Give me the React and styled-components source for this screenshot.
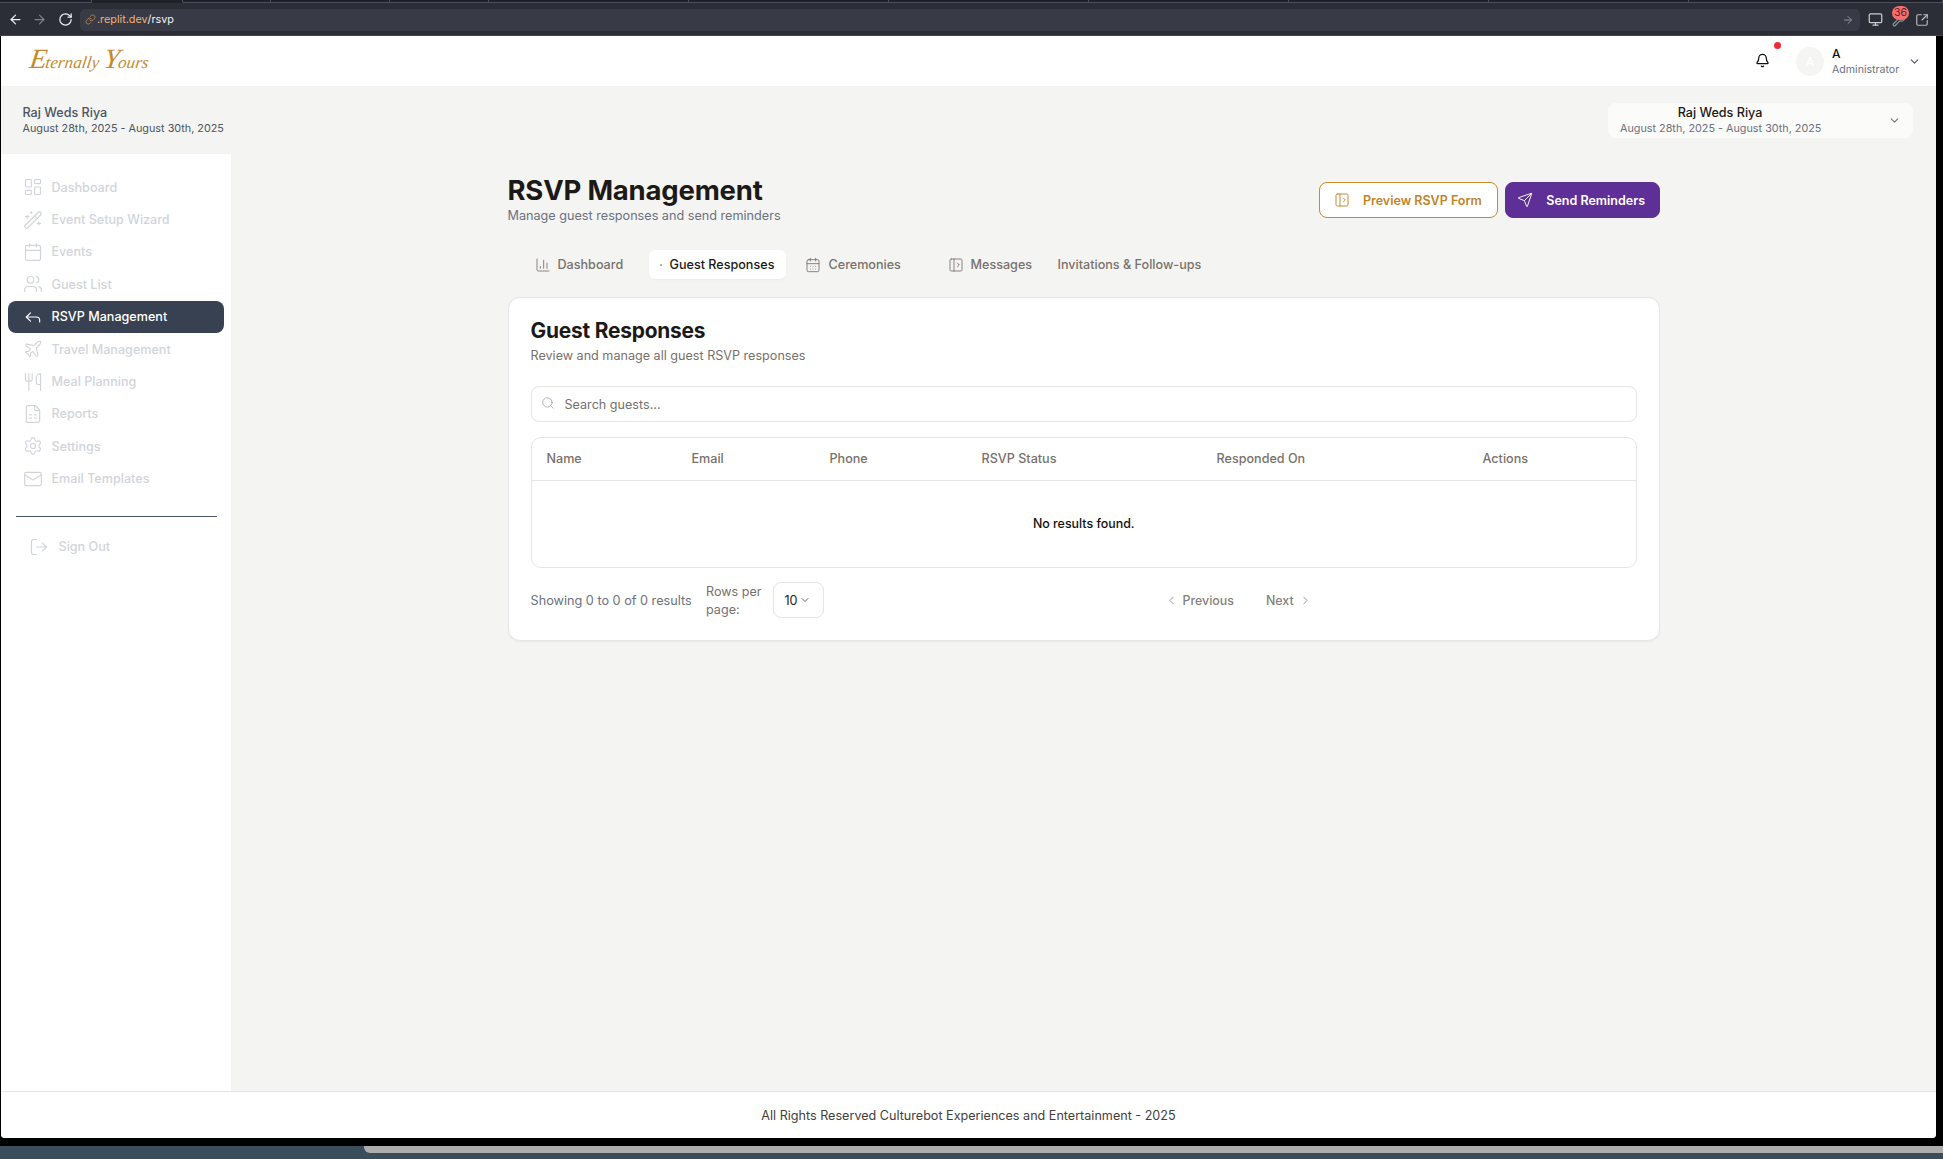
import React from 'react';
import styled, { createGlobalStyle } from 'styled-components';
import {
  ArrowLeft, ArrowRight, RotateCw, Link as LinkIcon, Monitor, Wrench, SquareArrowOutUpRight, Bell, ChevronDown,
  LayoutDashboard, WandSparkles, Calendar, Users, Reply, Plane, Utensils, FileSpreadsheet, Settings, Mail, LogOut,
  ChartColumn, CalendarDays, PanelLeftOpen, Send, Search, ChevronLeft, ChevronRight,
} from 'lucide-react';

const Global = createGlobalStyle`
  html, body { margin: 0; padding: 0; background: #000; }
  * { box-sizing: border-box; }
  body { font-family: Inter, "Liberation Sans", sans-serif; width: 1943px; height: 1159px; overflow: hidden; }
`;

const Screen = styled.div`display:flex;flex-direction:column;width:1943px;height:1159px;background:#000;`;
const TabStrip = styled.div`display:flex;height:3px;background:#1e2127;`;
const StripTab = styled.div`width:${p => p.$w}px;height:3px;border-bottom:1px solid ${p => (p.$active ? 'transparent' : '#4b505c')};border-right:1px solid #4b505c;`;
const Chrome = styled.div`display:flex;align-items:center;height:33px;padding:1px 10px 0 8px;background:#2b2e36;border-bottom:1px solid #41444d;color:#e5e7eb;`;
const NavIcon = styled.span`display:flex;width:${p => p.$w || 24}px;color:${p => p.$c || '#eceef2'};`;
const UrlBar = styled.div`display:flex;align-items:center;flex:1;height:22px;margin:0 4px 0 0;padding:0 6px 0 5px;border-radius:5px;background:#383b45;font-size:10.8px;`;
const Domain = styled.span`color:#f0ae74;margin-left:1px;`;
const Path = styled.span`color:#f1f2f4;flex:1;`;
const ExtWrap = styled.div`position:relative;display:flex;width:23px;justify-content:center;color:#8e919a;`;
const Badge = styled.span`position:absolute;top:-7px;left:5px;width:17px;height:14px;border-radius:8px;background:#f76e6e;color:#5a1f24;font-size:10.5px;line-height:14px;text-align:center;`;

const Frame = styled.div`display:flex;flex-direction:column;flex:none;width:1935px;height:1102px;margin-left:1px;background:#fff;border-radius:0 0 4px 4px;overflow:hidden;`;
const Header = styled.header`display:flex;align-items:center;height:50px;padding:0 15px 0 29px;background:#fff;`;
const Logo = styled.div`flex:1;margin-top:-4px;font-family:"Liberation Serif",serif;font-style:italic;font-size:17px;letter-spacing:0.1px;color:#c48a2c;transform:skewX(-8deg);transform-origin:left center;`;
const LogoCap = styled.span`font-size:28px;line-height:28px;letter-spacing:-1px;`;
const BellWrap = styled.div`position:relative;display:flex;width:20px;margin:-2px 21px 0 0;color:#111;`;
const Dot = styled.span`position:absolute;top:-11px;left:19px;width:7px;height:7px;border-radius:50%;background:#ef2b35;`;
const Avatar = styled.div`display:flex;align-items:center;justify-content:center;width:28px;height:29px;margin-right:8px;border-radius:50%;background:#f5f5f4;color:#fff;font-size:12px;font-weight:500;`;
const UserBox = styled.div`display:flex;flex-direction:column;width:76px;padding-top:2px;`;
const UserName = styled.span`font-size:12px;font-weight:500;line-height:14px;color:#111;`;
const UserRole = styled.span`font-size:10.6px;line-height:17px;color:#6b7280;`;
const SmallChevron = styled.span`display:flex;color:#4b5563;`;

const Body = styled.div`display:flex;flex-direction:column;flex:1;background:#f4f4f2;min-height:0;`;
const EventBar = styled.div`display:flex;justify-content:space-between;align-items:center;height:68px;padding:0 23px 0 21.5px;`;
const EventName = styled.div`font-size:12.6px;font-weight:500;line-height:17px;color:#4b5563;`;
const EventDate = styled.div`font-size:10.8px;line-height:15px;color:#4b5563;`;
const EventSelect = styled.div`position:relative;width:305px;height:35px;padding:1px 0 0 12px;border-radius:8px;background:#fbfbfa;`;
const SelName = styled.div`font-size:12.6px;font-weight:500;line-height:17px;color:#1c1917;text-align:center;width:200px;`;
const SelDate = styled.div`font-size:10.8px;line-height:15px;color:#6b7280;`;
const SelChevron = styled.span`position:absolute;right:12px;top:11px;display:flex;color:#6b7280;`;

const Columns = styled.div`display:flex;flex:1;min-height:0;`;
const Sidebar = styled.nav`flex:none;width:230px;padding:0 7px;background:#fff;`;
const NavList = styled.div`display:flex;flex-direction:column;padding-top:17px;`;
const NavItem = styled.div`display:flex;align-items:center;gap:9px;height:32.4px;padding-left:14.5px;border-radius:8px;font-size:12.6px;font-weight:500;color:${p => (p.$active ? '#fff' : '#d1d5db')};background:${p => (p.$active ? '#374151' : 'transparent')};`;
const Divider = styled.div`height:1px;margin:21px 7px 0 8px;background:#4b5563;`;
const SignOut = styled.div`display:flex;align-items:center;gap:9.5px;height:32px;margin-top:14px;padding-left:21px;font-size:12.6px;font-weight:500;color:#d1d5db;`;

const Main = styled.main`flex:1;padding:19px 276px 0 276.5px;`;
const TitleRow = styled.div`display:flex;justify-content:space-between;align-items:flex-start;height:78px;`;
const H1 = styled.h1`margin:0;font-size:27.5px;font-weight:700;line-height:35px;letter-spacing:-0.2px;color:#1c1917;`;
const Sub = styled.p`margin:0;font-size:12.65px;line-height:15px;color:#6b7280;`;
const Buttons = styled.div`display:flex;gap:7px;padding-top:9px;`;
const Btn = styled.button`display:flex;align-items:center;gap:13px;height:36px;padding:0 ${p => (p.$primary ? '14px 0 11.5px' : '15px 0 14px')};border:1px solid ${p => (p.$primary ? '#5f2f98' : '#c48a2c')};border-radius:8px;background:${p => (p.$primary ? '#5f2f98' : '#fff')};color:${p => (p.$primary ? '#fff' : '#c08428')};font:600 12.5px Inter,sans-serif;`;
const Tabs = styled.div`display:flex;align-items:center;height:29px;margin-top:-1px;padding-left:13px;`;
const Tab = styled.div`display:flex;align-items:center;gap:${p => p.$gap ?? 7}px;flex:none;width:${p => p.$w}px;height:29px;padding-left:${p => p.$pl}px;border-radius:6px;font-size:12.6px;font-weight:500;color:${p => (p.$active ? '#1c1917' : '#78716c')};background:${p => (p.$active ? '#fff' : 'transparent')};box-shadow:${p => (p.$active ? '0 1px 2px rgba(0,0,0,.04)' : 'none')};`;
const TinyDot = styled.span`width:2px;height:2px;border-radius:50%;background:#999;`;

const Card = styled.section`margin-top:18px;height:344px;padding:19px 22px 0;border:1px solid #e7e7ea;border-radius:12px;background:#fff;box-shadow:0 1px 2px rgba(0,0,0,.05);`;
const H2 = styled.h2`margin:0;font-size:20.9px;font-weight:700;line-height:28px;letter-spacing:-0.2px;color:#1c1917;`;
const CardSub = styled.p`margin:2px 0 0;font-size:12.6px;line-height:17px;color:#78716c;`;
const SearchBox = styled.div`display:flex;align-items:center;gap:10px;height:36px;margin-top:22px;padding:0 9px;border:1px solid #e7e5e4;border-radius:8px;font-size:12.6px;color:#78716c;`;
const SearchIcon = styled.span`display:flex;color:#9ca3af;margin-top:-2px;`;
const TableBox = styled.div`margin-top:15px;height:131px;border:1px solid #e7e5e4;border-radius:10px;`;
const HeadRow = styled.div`display:grid;grid-template-columns:145px 138px 152px 235px 266px 1fr;align-items:center;height:43px;padding-bottom:1px;border-bottom:1px solid #e7e5e4;`;
const HeadCell = styled.div`padding-left:15px;font-size:12.6px;font-weight:500;color:#78716c;`;
const Empty = styled.div`display:flex;align-items:center;justify-content:center;height:86px;padding-bottom:2px;font-size:12.4px;font-weight:500;color:#111;`;
const Pager = styled.div`display:flex;align-items:center;height:36px;margin-top:14px;`;
const Showing = styled.span`width:175.5px;font-size:12.7px;color:#6b7280;`;
const RowsLabel = styled.span`width:66.5px;margin-top:2px;font-size:12.6px;line-height:18px;color:#78716c;`;
const RowSelect = styled.div`display:flex;align-items:center;gap:1px;width:51px;height:36px;padding-left:11px;border:1px solid #e7e5e4;border-radius:8px;font-size:12.6px;color:#1c1917;`;
const PageBtn = styled.div`display:flex;align-items:center;gap:5px;margin-left:${p => p.$ml}px;font-size:12.4px;font-weight:500;color:#85817c;`;

const Footer = styled.footer`display:flex;align-items:center;justify-content:center;flex:none;height:47px;border-top:1px solid #e7e5e4;background:#fff;font-size:12.6px;color:#44403c;`;
const Desktop = styled.div`flex:1;margin-top:8px;background:#3a4d5b;`;
const Dock = styled.div`height:7px;margin-left:364px;border-radius:0 0 0 6px;background:#adadad;`;

const nav = [
  ['Dashboard', LayoutDashboard], ['Event Setup Wizard', WandSparkles], ['Events', Calendar], ['Guest List', Users],
  ['RSVP Management', Reply, true], ['Travel Management', Plane], ['Meal Planning', Utensils], ['Reports', FileSpreadsheet],
  ['Settings', Settings], ['Email Templates', Mail],
];
const heads = ['Name', 'Email', 'Phone', 'RSVP Status', 'Responded On', 'Actions'];
const strips = [92, 91, 88, 119, 99, 200, 200, 200, 200, 200, 200, 254];

export default function App() {
  return (
    <Screen>
      <Global />
      <TabStrip>{strips.map((w, i) => <StripTab key={i} $w={w} $active={i === 1} />)}</TabStrip>
      <Chrome>
        <NavIcon><ArrowLeft size={15} /></NavIcon>
        <NavIcon $w={26} $c="#7d8088"><ArrowRight size={15} /></NavIcon>
        <NavIcon $w={22}><RotateCw size={15} /></NavIcon>
        <UrlBar>
          <LinkIcon size={11} color="#a8835f" />
          <Domain>.replit.dev</Domain><Path>/rsvp</Path>
          <ArrowRight size={12} color="#8e919a" />
        </UrlBar>
        <ExtWrap><Monitor size={15} color="#c9cbd0" /></ExtWrap>
        <ExtWrap><Wrench size={14} /><Badge>36</Badge></ExtWrap>
        <ExtWrap><SquareArrowOutUpRight size={14} color="#b6b8be" /></ExtWrap>
      </Chrome>
      <Frame>
        <Header>
          <Logo><LogoCap>E</LogoCap>ternally <LogoCap>Y</LogoCap>ours</Logo>
          <BellWrap><Bell size={15} /><Dot /></BellWrap>
          <Avatar>A</Avatar>
          <UserBox><UserName>A</UserName><UserRole>Administrator</UserRole></UserBox>
          <SmallChevron><ChevronDown size={13} /></SmallChevron>
        </Header>
        <Body>
          <EventBar>
            <div>
              <EventName>Raj Weds Riya</EventName>
              <EventDate>August 28th, 2025 - August 30th, 2025</EventDate>
            </div>
            <EventSelect>
              <SelName>Raj Weds Riya</SelName>
              <SelDate>August 28th, 2025 - August 30th, 2025</SelDate>
              <SelChevron><ChevronDown size={13} /></SelChevron>
            </EventSelect>
          </EventBar>
          <Columns>
            <Sidebar>
              <NavList>
                {nav.map(([label, Icon, active]) => (
                  <NavItem key={label} $active={active}><Icon size={20} strokeWidth={1.4} />{label}</NavItem>
                ))}
              </NavList>
              <Divider />
              <SignOut><LogOut size={20} strokeWidth={1.4} />Sign Out</SignOut>
            </Sidebar>
            <Main>
              <TitleRow>
                <div>
                  <H1>RSVP Management</H1>
                  <Sub>Manage guest responses and send reminders</Sub>
                </div>
                <Buttons>
                  <Btn><PanelLeftOpen size={16} strokeWidth={1.4} />Preview RSVP Form</Btn>
                  <Btn $primary><Send size={16} strokeWidth={1.4} />Send Reminders</Btn>
                </Buttons>
              </TitleRow>
              <Tabs>
                <Tab $w={128} $pl={14}><ChartColumn size={16} strokeWidth={1.3} />Dashboard</Tab>
                <Tab $active $w={137} $pl={11} $gap={8}><TinyDot />Guest Responses</Tab>
                <Tab $w={147} $pl={19} $gap={8}><CalendarDays size={16} strokeWidth={1.3} />Ceremonies</Tab>
                <Tab $w={125} $pl={15}><PanelLeftOpen size={16} strokeWidth={1.3} />Messages</Tab>
                <Tab $w={160} $pl={0}>Invitations &amp; Follow-ups</Tab>
              </Tabs>
              <Card>
                <H2>Guest Responses</H2>
                <CardSub>Review and manage all guest RSVP responses</CardSub>
                <SearchBox><SearchIcon><Search size={14} strokeWidth={1.4} /></SearchIcon>Search guests...</SearchBox>
                <TableBox>
                  <HeadRow>{heads.map(h => <HeadCell key={h}>{h}</HeadCell>)}</HeadRow>
                  <Empty>No results found.</Empty>
                </TableBox>
                <Pager>
                  <Showing>Showing 0 to 0 of 0 results</Showing>
                  <RowsLabel>Rows per page:</RowsLabel>
                  <RowSelect>10<ChevronDown size={12} strokeWidth={1.3} /></RowSelect>
                  <PageBtn $ml={341}><ChevronLeft size={13} strokeWidth={1.5} />Previous</PageBtn>
                  <PageBtn $ml={32}>Next<ChevronRight size={13} strokeWidth={1.5} /></PageBtn>
                </Pager>
              </Card>
            </Main>
          </Columns>
        </Body>
        <Footer>All Rights Reserved Culturebot Experiences and Entertainment - 2025</Footer>
      </Frame>
      <Desktop><Dock /></Desktop>
    </Screen>
  );
}
